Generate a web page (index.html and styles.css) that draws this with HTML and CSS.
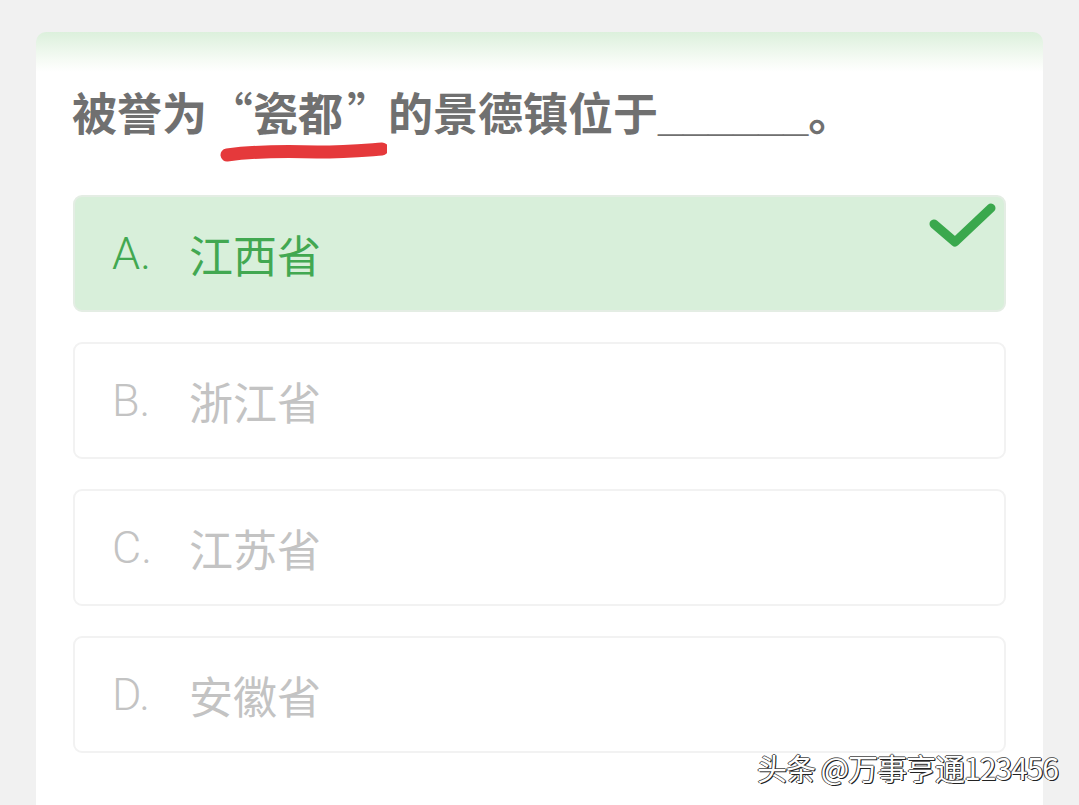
FILE: index.html
```html
<!DOCTYPE html>
<html lang="zh-CN">
<head>
<meta charset="utf-8">
<title>答题</title>
<link rel="stylesheet" href="styles.css">
</head>
<body>
<div class="card">
  <div class="question">被誉为<span class="mark"><span class="lq">“</span>瓷都<span class="rq">”</span><svg class="scribble" viewBox="0 0 180 24" width="180" height="24"><path d="M20 16 C 50 12, 80 12, 110 13 C 140 13, 160 11, 175 10" fill="none" stroke="#e5393b" stroke-width="13" stroke-linecap="round"/></svg></span>的景德镇位于<span class="blank">______</span>。</div>
  <div class="options">
    <div class="option correct">
      <span class="label">A.</span><span class="text">江西省</span>
      <svg class="check" viewBox="0 0 70 50" width="70" height="50"><path d="M6 24 L27 42 L63 8" fill="none" stroke="#3aa84d" stroke-width="9" stroke-linecap="round" stroke-linejoin="round"/></svg>
    </div>
    <div class="option">
      <span class="label">B.</span><span class="text">浙江省</span>
    </div>
    <div class="option">
      <span class="label">C.</span><span class="text">江苏省</span>
    </div>
    <div class="option">
      <span class="label">D.</span><span class="text">安徽省</span>
    </div>
  </div>
</div>
<div class="watermark">头条 @万事亨通123456</div>
</body>
</html>
```

FILE: styles.css
```css
html, body {
  margin: 0;
  padding: 0;
}
body {
  background: #f1f1f1;
  width: 1079px;
  height: 805px;
  overflow: hidden;
  position: relative;
  font-family: "Noto Sans CJK SC", "Noto Sans", sans-serif;
}
.card {
  margin: 32px 0 0 36px;
  width: 1007px;
  height: 800px;
  background: linear-gradient(to bottom, #dcf0dc 0px, #f6fbf5 28px, #ffffff 40px, #ffffff 100%);
  border-radius: 10px 10px 0 0;
  box-sizing: border-box;
}
.question {
  padding: 50px 0 0 36px;
  font-size: 45px;
  line-height: 60px;
  font-weight: 700;
  color: #707070;
  white-space: nowrap;
}
.mark {
  position: relative;
}
.lq, .rq {
  display: inline-block;
  font-weight: 500;
}
.lq {
  width: 46px;
  text-align: right;
}
.rq {
  width: 45px;
  text-align: left;
  text-indent: 4px;
}
.scribble {
  position: absolute;
  left: 0;
  top: 60px;
}
.blank {
  font-family: "Liberation Sans", sans-serif;
  font-weight: 700;
}
.options {
  margin: 49px 0 0 37px;
  width: 933px;
  display: flex;
  flex-direction: column;
  gap: 30px;
}
.option {
  position: relative;
  height: 117px;
  box-sizing: border-box;
  border: 2px solid #f2f2f2;
  border-radius: 9px;
  background: #fff;
  display: flex;
  align-items: center;
  padding-left: 37px;
  font-size: 44px;
  color: #c3c3c3;
}
.option.correct {
  background: #d8efda;
  border-color: #e4ede4;
  color: #42a851;
}
.label {
  width: 77px;
  font-family: "Roboto", "Noto Sans", sans-serif;
  font-weight: 300;
  font-size: 45px;
}
.text {
  font-weight: 400;
}
.check {
  position: absolute;
  right: 6px;
  top: 3px;
}
.watermark {
  position: absolute;
  left: 757px;
  top: 747px;
  font-size: 30px;
  line-height: 40px;
  color: #fff;
  text-shadow: 1px 1px 0 #222, -1px 0 0 #444, 0 -1px 0 #666, 1px 0 0 #333;
  letter-spacing: -1px;
}
```
